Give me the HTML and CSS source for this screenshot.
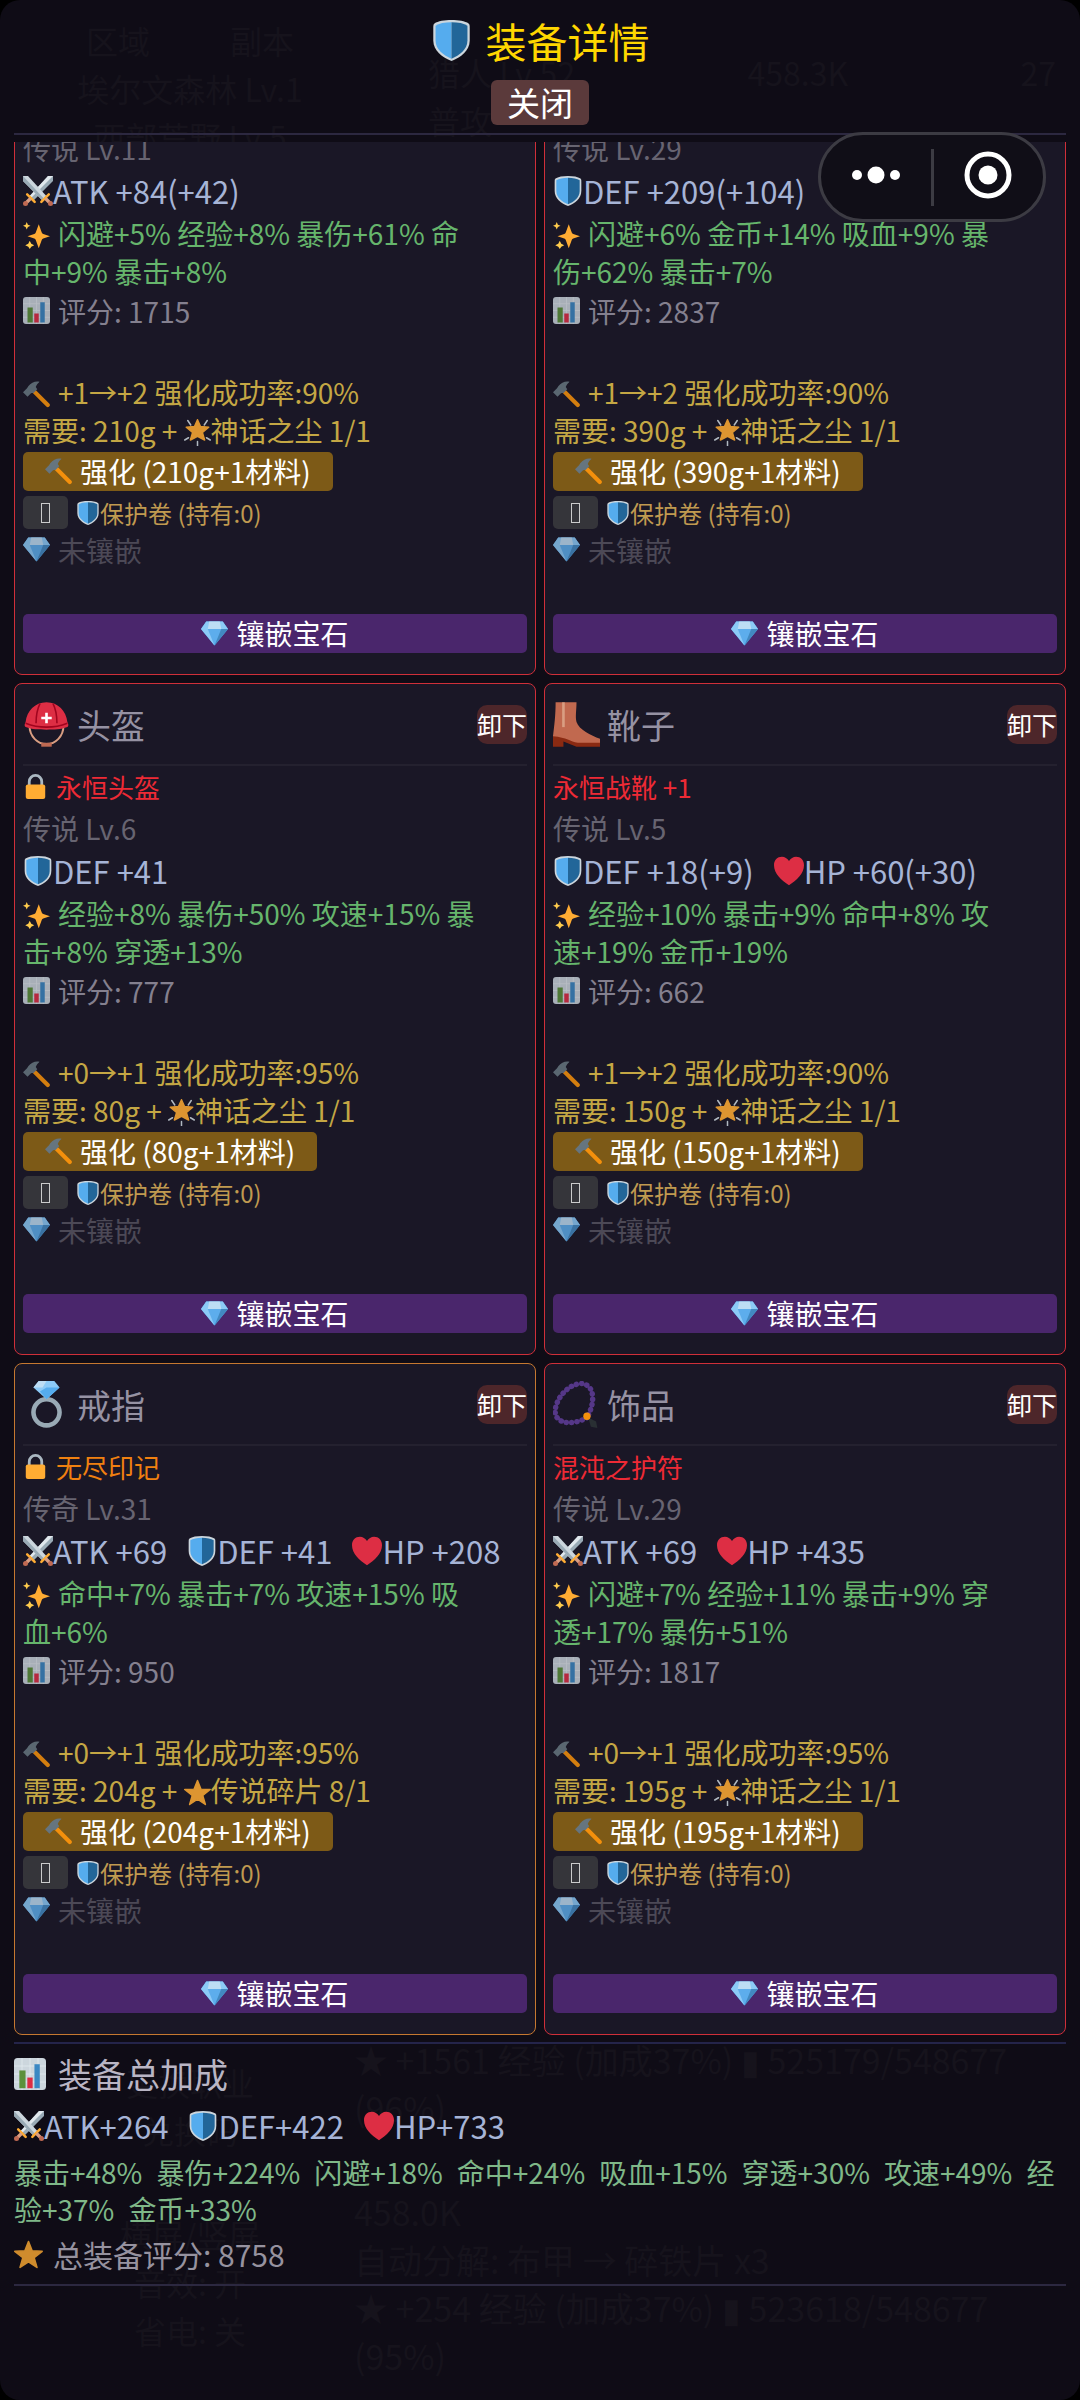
FILE: index.html
```html
<!DOCTYPE html>
<html lang="zh-CN">
<head>
  <meta charset="UTF-8" />
  <meta name="viewport" content="width=device-width, initial-scale=1.0"/>
  <title>装备详情</title>
  <link rel="stylesheet" href="styles.css">
</head>
<body>

  <!-- icon sprite -->
  <svg class="sprite" aria-hidden="true">
    <symbol id="shield" viewBox="0 0 36 36">
      <path fill="#ccd6dd" d="M18 0c6 0 12 1 15 3 1 1 1 2 1 4v11c0 9-8 15-16 18C10 33 2 27 2 18V7c0-2 0-3 1-4 3-2 9-3 15-3z"/>
      <path fill="#55acee" d="M18 2C12 2 7 3 4 5v13c0 8 7 13 14 16z"/>
      <path fill="#226699" d="M18 2c6 0 11 1 14 3v13c0 8-7 13-14 16z"/>
    </symbol>
    <symbol id="swords" viewBox="0 0 36 36">
      <path fill="#99aab5" d="M36 0v6L13 29l-5-5L30 0z"/>
      <path fill="#e1e8ed" d="M36 0L10 26l-2-2L30 0z"/>
      <path fill="#ccd6dd" d="M0 0v6l23 23 5-5L6 0z"/>
      <path fill="#99aab5" d="M0 0v6l23 23 2-2z"/>
      <path d="M5 22l9 9M31 22l-9 9" stroke="#ffac33" stroke-width="3" stroke-linecap="round"/>
      <path d="M9 27l-6 6M27 27l6 6" stroke="#d99e82" stroke-width="4"/>
      <circle cx="3" cy="33" r="3" fill="#bf6952"/><circle cx="33" cy="33" r="3" fill="#bf6952"/>
    </symbol>
    <symbol id="heart" viewBox="0 0 36 36">
      <path fill="#dd2e44" d="M36 11c0-6-4-10-9.500-10C23 1 20 3 18 6c-2-3-5-5-8.500-5C4 1 0 5 0 11c0 10 9 18 18 24 9-6 18-14 18-24z"/>
    </symbol>
    <symbol id="sparkles" viewBox="0 0 36 36">
      <path fill="#ffac33" d="M21 3l4 11c.5 1 1 1.500 2 2l9 3-9 3c-1 .5-1.500 1-2 2l-4 11-4-11c-.5-1-1-1.500-2-2l-9-3 9-3c1-.5 1.500-1 2-2z"/>
      <path fill="#ffcc4d" d="M5 0l1.500 3.500L10 5 6.500 6.500 5 10 3.500 6.500 0 5l3.500-1.500zM9 25l2 4 4 2-4 2-2 3-2-3-4-2 4-2z"/>
    </symbol>
    <symbol id="chart" viewBox="0 0 36 36">
      <rect width="36" height="36" rx="4" fill="#ccd6dd"/>
      <path d="M0 9h36M0 18h36M0 27h36M9 0v36M18 0v36M27 0v36" stroke="#e1e8ed"/>
      <path fill="#5c913b" d="M6 14h7v20H6z"/><path fill="#dd2e44" d="M15 22h6v12h-6z"/><path fill="#3b88c3" d="M23 7h6v27h-6z"/>
    </symbol>
    <symbol id="hammer" viewBox="0 0 36 36">
      <path d="M13 12l20 20" stroke="#f4900c" stroke-width="5.500" stroke-linecap="round"/>
      <path fill="#66757f" d="M22 1c-6-1-11 1-15 6-1 2-2 3-3 4l-4 4 6 6 4-4c1-1 2-1 4-1l5-5-2-3c1-3 3-5 5-7z"/>
    </symbol>
    <symbol id="star" viewBox="0 0 36 36">
      <path fill="#ffac33" stroke="#ffac33" stroke-width="2" stroke-linejoin="round" d="M18 2l4.500 11.500L35 14l-10 8 3.500 12L18 27 7.500 34 11 22 1 14l12.500-.5z"/>
    </symbol>
    <symbol id="glow" viewBox="0 0 36 36">
      <path d="M18 30v6M30 25l5 3M6 25l-5 3M27 8l4-6M9 8L5 2" stroke="#ccd6dd" stroke-width="2" stroke-linecap="round"/>
      <path fill="#ffac33" stroke="#ffac33" stroke-width="2" stroke-linejoin="round" d="M18 1l4 9 11 1-8.500 7 3 10L18 23l-9.500 5 3-10L3 11l11-1z"/>
    </symbol>
    <symbol id="gem" viewBox="0 0 36 36">
      <path fill="#5dadec" d="M7 2h22l7 10-18 22L0 12z"/>
      <path fill="#8ccaf7" d="M7 2h22l7 10H0z"/>
      <path fill="#bdddf4" d="M11 2h14l2 10H9z"/>
      <path fill="#8ccaf7" d="M0 12h9l9 22z"/><path fill="#4289c1" d="M36 12h-9l-9 22z"/>
    </symbol>
    <symbol id="lock" viewBox="0 0 36 36">
      <path fill="none" stroke="#aab8c2" stroke-width="4" d="M9 17v-6a9 9 0 0 1 18 0v6"/>
      <rect x="4" y="15" width="28" height="21" rx="3" fill="#ffac33"/>
    </symbol>
    <symbol id="helmet" viewBox="0 0 36 36">
      <path fill="none" stroke="#d99e82" stroke-width="1.500" d="M5 19c0 8 6 14 13 14s13-6 13-14"/>
      <path fill="#bf6952" d="M14 32h8v3h-8z"/>
      <path fill="#dd2e44" d="M18 1C9 1 3 8 2 16c-1 2-1 3 0 4 5 2 10 2 16 2s11 0 16-2c1-1 1-2 0-4C33 8 27 1 18 1z"/>
      <path fill="none" stroke="#a0041e" stroke-width="1.200" d="M13 2c-2 4-3 9-3 15M23 2c2 4 3 9 3 15M2 17c5 2 10 3 16 3s11-1 16-3"/>
      <path fill="#fff" d="M17 9h2v3h3v2h-3v3h-2v-3h-3v-2h3z"/>
    </symbol>
    <symbol id="boot" viewBox="0 0 36 36">
      <path fill="#8a2a12" d="M0 26h8l18 5 10-1v5H18L8 31v4H0z"/>
      <path fill="#c1694f" d="M2 1h16c0 6-1 11 0 15 2 6 11 10 18 13v3H19C13 31 11 28 0 27c1-8 2-16 2-26z"/>
      <path fill="#d99e82" d="M7 1h2v19H7z"/>
    </symbol>
    <symbol id="ring" viewBox="0 0 36 36">
      <circle cx="18" cy="24" r="10" fill="none" stroke="#99aab5" stroke-width="3.500"/>
      <path fill="#8ccaf7" d="M12 0h12l4 5-10 9L8 5z"/><path fill="#55acee" d="M18 0v5h10l-10 9-5-6 5-3z"/>
      <path fill="#bdddf4" d="M12 0h6L15 5H8z"/>
    </symbol>
    <symbol id="beads" viewBox="0 0 36 36">
      <path fill="none" stroke="#553788" stroke-width="4.200" stroke-linecap="round" stroke-dasharray="0.100 4" d="M26 28C18 33 5 34 2 26 0 17 9 4 20 2c12-1 13 14 6 26z"/>
      <path fill="#292f33" d="M27 28l6 3 1 5-5-1z"/>
      <circle cx="26" cy="27" r="2.800" fill="#f4900c"/>
    </symbol>
  </svg>

  <!-- game screen, dimmed under the panel -->
  <div class="game" aria-hidden="true">
    <div class="game-side">
      <div class="game-group">
        <p>区域&emsp;&emsp;&ensp;副本</p>
        <p>埃尔文森林 Lv.1</p>
        <p>西部荒野 Lv.5</p>
      </div>
      <div class="game-group">
        <p>更换职业</p>
        <p>兑换码</p>
        <p class="game-gap">横屏/竖屏</p>
        <p>音效: 开</p>
        <p>省电: 关</p>
      </div>
    </div>
    <div class="game-main">
      <div class="game-top"><p>猎人 Lv.52<br>普攻</p><p>458.3K</p><p>27</p></div>
      <div class="game-log">
        <p>★ +1561 经验 (加成37%) ▮ 525179/548677 (96%)</p>
        <p class="game-gap">458.0K</p>
        <p>自动分解: 布甲 → 碎铁片 x3</p>
        <p>★ +254 经验 (加成37%) ▮ 523618/548677 (95%)</p>
      </div>
    </div>
  </div>

  <div class="panel">
    <header class="panel-header">
      <h1><svg><use href="#shield"/></svg>装备详情</h1>
      <button type="button" class="btn-close">关闭</button>
    </header>

    <main class="equip-list">
      <div class="equip-grid">

        <section class="card legend">
          <p class="level">传说 Lv.11</p>
          <p class="stats"><span><svg><use href="#swords"/></svg>ATK +84(+42)</span></p>
          <p class="affix"><svg><use href="#sparkles"/></svg>闪避+5% 经验+8% 暴伤+61% 命中+9% 暴击+8%</p>
          <p class="score"><svg><use href="#chart"/></svg>评分: 1715</p>
          <div class="upgrade">
            <p><svg class="lead"><use href="#hammer"/></svg>+1→+2 强化成功率:90%</p>
            <p>需要: 210g + <svg><use href="#glow"/></svg>神话之尘 1/1</p>
          </div>
          <button type="button" class="btn-upgrade"><svg><use href="#hammer"/></svg>强化 (210g+1材料)</button>
          <div class="protect"><button type="button" class="toggle" aria-label="保护卷"><i></i></button><svg><use href="#shield"/></svg>保护卷 (持有:0)</div>
          <p class="socket"><svg><use href="#gem"/></svg>未镶嵌</p>
          <button type="button" class="btn-gem"><svg><use href="#gem"/></svg>镶嵌宝石</button>
        </section>

        <section class="card legend">
          <p class="level">传说 Lv.29</p>
          <p class="stats"><span><svg><use href="#shield"/></svg>DEF +209(+104)</span></p>
          <p class="affix"><svg><use href="#sparkles"/></svg>闪避+6% 金币+14% 吸血+9% 暴伤+62% 暴击+7%</p>
          <p class="score"><svg><use href="#chart"/></svg>评分: 2837</p>
          <div class="upgrade">
            <p><svg class="lead"><use href="#hammer"/></svg>+1→+2 强化成功率:90%</p>
            <p>需要: 390g + <svg><use href="#glow"/></svg>神话之尘 1/1</p>
          </div>
          <button type="button" class="btn-upgrade"><svg><use href="#hammer"/></svg>强化 (390g+1材料)</button>
          <div class="protect"><button type="button" class="toggle" aria-label="保护卷"><i></i></button><svg><use href="#shield"/></svg>保护卷 (持有:0)</div>
          <p class="socket"><svg><use href="#gem"/></svg>未镶嵌</p>
          <button type="button" class="btn-gem"><svg><use href="#gem"/></svg>镶嵌宝石</button>
        </section>

        <section class="card legend">
          <div class="card-head">
            <h2><svg><use href="#helmet"/></svg>头盔</h2>
            <button type="button" class="btn-remove">卸下</button>
          </div>
          <p class="name"><svg><use href="#lock"/></svg>永恒头盔</p>
          <p class="level">传说 Lv.6</p>
          <p class="stats"><span><svg><use href="#shield"/></svg>DEF +41</span></p>
          <p class="affix"><svg><use href="#sparkles"/></svg>经验+8% 暴伤+50% 攻速+15% 暴击+8% 穿透+13%</p>
          <p class="score"><svg><use href="#chart"/></svg>评分: 777</p>
          <div class="upgrade">
            <p><svg class="lead"><use href="#hammer"/></svg>+0→+1 强化成功率:95%</p>
            <p>需要: 80g + <svg><use href="#glow"/></svg>神话之尘 1/1</p>
          </div>
          <button type="button" class="btn-upgrade"><svg><use href="#hammer"/></svg>强化 (80g+1材料)</button>
          <div class="protect"><button type="button" class="toggle" aria-label="保护卷"><i></i></button><svg><use href="#shield"/></svg>保护卷 (持有:0)</div>
          <p class="socket"><svg><use href="#gem"/></svg>未镶嵌</p>
          <button type="button" class="btn-gem"><svg><use href="#gem"/></svg>镶嵌宝石</button>
        </section>

        <section class="card legend">
          <div class="card-head">
            <h2><svg><use href="#boot"/></svg>靴子</h2>
            <button type="button" class="btn-remove">卸下</button>
          </div>
          <p class="name">永恒战靴 +1</p>
          <p class="level">传说 Lv.5</p>
          <p class="stats"><span><svg><use href="#shield"/></svg>DEF +18(+9)</span><span><svg><use href="#heart"/></svg>HP +60(+30)</span></p>
          <p class="affix"><svg><use href="#sparkles"/></svg>经验+10% 暴击+9% 命中+8% 攻速+19% 金币+19%</p>
          <p class="score"><svg><use href="#chart"/></svg>评分: 662</p>
          <div class="upgrade">
            <p><svg class="lead"><use href="#hammer"/></svg>+1→+2 强化成功率:90%</p>
            <p>需要: 150g + <svg><use href="#glow"/></svg>神话之尘 1/1</p>
          </div>
          <button type="button" class="btn-upgrade"><svg><use href="#hammer"/></svg>强化 (150g+1材料)</button>
          <div class="protect"><button type="button" class="toggle" aria-label="保护卷"><i></i></button><svg><use href="#shield"/></svg>保护卷 (持有:0)</div>
          <p class="socket"><svg><use href="#gem"/></svg>未镶嵌</p>
          <button type="button" class="btn-gem"><svg><use href="#gem"/></svg>镶嵌宝石</button>
        </section>

        <section class="card epic">
          <div class="card-head">
            <h2><svg><use href="#ring"/></svg>戒指</h2>
            <button type="button" class="btn-remove">卸下</button>
          </div>
          <p class="name"><svg><use href="#lock"/></svg>无尽印记</p>
          <p class="level">传奇 Lv.31</p>
          <p class="stats"><span><svg><use href="#swords"/></svg>ATK +69</span><span><svg><use href="#shield"/></svg>DEF +41</span><span><svg><use href="#heart"/></svg>HP +208</span></p>
          <p class="affix"><svg><use href="#sparkles"/></svg>命中+7% 暴击+7% 攻速+15% 吸血+6%</p>
          <p class="score"><svg><use href="#chart"/></svg>评分: 950</p>
          <div class="upgrade">
            <p><svg class="lead"><use href="#hammer"/></svg>+0→+1 强化成功率:95%</p>
            <p>需要: 204g + <svg><use href="#star"/></svg>传说碎片 8/1</p>
          </div>
          <button type="button" class="btn-upgrade"><svg><use href="#hammer"/></svg>强化 (204g+1材料)</button>
          <div class="protect"><button type="button" class="toggle" aria-label="保护卷"><i></i></button><svg><use href="#shield"/></svg>保护卷 (持有:0)</div>
          <p class="socket"><svg><use href="#gem"/></svg>未镶嵌</p>
          <button type="button" class="btn-gem"><svg><use href="#gem"/></svg>镶嵌宝石</button>
        </section>

        <section class="card legend">
          <div class="card-head">
            <h2><svg><use href="#beads"/></svg>饰品</h2>
            <button type="button" class="btn-remove">卸下</button>
          </div>
          <p class="name">混沌之护符</p>
          <p class="level">传说 Lv.29</p>
          <p class="stats"><span><svg><use href="#swords"/></svg>ATK +69</span><span><svg><use href="#heart"/></svg>HP +435</span></p>
          <p class="affix"><svg><use href="#sparkles"/></svg>闪避+7% 经验+11% 暴击+9% 穿透+17% 暴伤+51%</p>
          <p class="score"><svg><use href="#chart"/></svg>评分: 1817</p>
          <div class="upgrade">
            <p><svg class="lead"><use href="#hammer"/></svg>+0→+1 强化成功率:95%</p>
            <p>需要: 195g + <svg><use href="#glow"/></svg>神话之尘 1/1</p>
          </div>
          <button type="button" class="btn-upgrade"><svg><use href="#hammer"/></svg>强化 (195g+1材料)</button>
          <div class="protect"><button type="button" class="toggle" aria-label="保护卷"><i></i></button><svg><use href="#shield"/></svg>保护卷 (持有:0)</div>
          <p class="socket"><svg><use href="#gem"/></svg>未镶嵌</p>
          <button type="button" class="btn-gem"><svg><use href="#gem"/></svg>镶嵌宝石</button>
        </section>

      </div>
    </main>

    <footer class="summary">
      <h2><svg><use href="#chart"/></svg>装备总加成</h2>
      <p class="stats"><span><svg><use href="#swords"/></svg>ATK+264</span><span><svg><use href="#shield"/></svg>DEF+422</span><span><svg><use href="#heart"/></svg>HP+733</span></p>
      <p class="total-affix">暴击+48%&ensp;暴伤+224%&ensp;闪避+18%&ensp;命中+24%&ensp;吸血+15%&ensp;穿透+30%&ensp;攻速+49%&ensp;经验+37%&ensp;金币+33%</p>
      <p class="total-score"><svg><use href="#star"/></svg>总装备评分: 8758</p>
    </footer>
  </div>

  <!-- mini program capsule -->
  <div class="capsule">
    <button type="button" aria-label="更多">
      <svg viewBox="0 0 50 50"><circle cx="6" cy="25" r="5"/><circle cx="25" cy="25" r="8.500"/><circle cx="44" cy="25" r="5"/></svg>
    </button>
    <button type="button" aria-label="关闭小程序">
      <svg viewBox="0 0 50 50"><circle cx="25" cy="25" r="21" fill="none" stroke="#fff" stroke-width="5"/><circle cx="25" cy="25" r="9.500"/></svg>
    </button>
  </div>

</body>
</html>
```

FILE: styles.css
```css
:root {
  --bg-color: #0f0c16;
  --card-bg: #1a1726;
  --line-color: #2c2840;
  --legend-color: #cf2f39;
  --epic-color: #c67830;
  --ghost-color: #16131c;
}

* {
  margin: 0;
  padding: 0;
  box-sizing: border-box;
}

html {
  background: #000;
}

body {
  font-family: "Noto Sans CJK SC", sans-serif;
  font-size: 28px;
  background: var(--bg-color);
  color: #fff;
  height: 100vh;
  border-radius: 20px;
  position: relative;
  overflow: hidden;
}

button {
  font-family: inherit;
  color: #fff;
  border: none;
  cursor: pointer;
}

h1, h2 {
  font-weight: normal;
}

svg {
  flex: none;
}

.sprite {
  display: none;
}

/* game screen behind */
.game {
  position: absolute;
  inset: 0;
  display: flex;
  color: var(--ghost-color);
  font-size: 32px;
  line-height: 48px;
}

.game-side {
  width: 330px;
  padding: 16px 0 46px 50px;
  text-align: center;
  display: flex;
  flex-direction: column;
  justify-content: space-between;
}

.game-main {
  flex: 1;
  padding: 48px 24px 20px;
  display: flex;
  flex-direction: column;
  justify-content: space-between;
}

.game-top {
  display: flex;
  justify-content: space-between;
  padding-left: 74px;
}

.game-log {
  font-size: 34px;
}

.game-gap {
  margin-top: 56px;
}

/* panel */
.panel {
  position: relative;
  height: 100%;
  padding: 0 14px;
  display: flex;
  flex-direction: column;
}

.panel-header {
  display: flex;
  flex-direction: column;
  align-items: center;
  padding: 10px 0 8px;
  margin-bottom: 7px;
  border-bottom: 2px solid var(--line-color);
}

.panel-header h1 {
  display: flex;
  align-items: center;
  gap: 14px;
  font-size: 41px;
  line-height: 60px;
  margin-bottom: 10px;
  color: #ffd700;
}

.panel-header h1 svg {
  width: 41px;
  height: 41px;
}

.btn-close {
  padding: 0 16px;
  font-size: 33px;
  line-height: 45px;
  border-radius: 6px;
  background: #5b3a3b;
}

.equip-list {
  flex: 1;
  min-height: 0;
  overflow: hidden;
  display: flex;
  flex-direction: column;
  justify-content: flex-end;
}

.equip-grid {
  display: grid;
  grid-template-columns: 1fr 1fr;
  gap: 8px;
}

.card {
  padding: 0 8px 21px;
  background: var(--card-bg);
  border: 1px solid;
  border-radius: 8px;
}

.card.legend {
  border-color: var(--legend-color);
}

.card.epic {
  border-color: var(--epic-color);
}

.card-head {
  display: flex;
  align-items: center;
  justify-content: space-between;
  height: 82px;
  border-bottom: 2px solid #24212f;
}

.card-head h2 {
  display: flex;
  align-items: center;
  gap: 7px;
  font-size: 34px;
  color: #9692a3;
}

.card-head h2 svg {
  width: 47px;
  height: 47px;
}

.btn-remove {
  width: 50px;
  font-size: 25px;
  line-height: 39px;
  border-radius: 10px;
  background: #4d262a;
}

.name,
.level,
.score,
.socket {
  display: flex;
  align-items: center;
  height: 41px;
}

.name {
  gap: 8px;
  font-size: 26px;
}

.name svg {
  width: 25px;
  height: 25px;
}

.legend .name {
  color: #ee2a35;
}

.epic .name {
  color: #f08010;
}

.level {
  color: #676471;
}

.stats {
  display: flex;
  gap: 20px;
  font-size: 31px;
  line-height: 46px;
  color: #a6b4d6;
}

.stats span {
  display: flex;
  align-items: center;
}

.stats svg {
  width: 30px;
  height: 30px;
}

.affix {
  padding-right: 48px;
  line-height: 38px;
  color: #66b56c;
}

.affix svg,
.upgrade svg {
  width: 27px;
  height: 27px;
  vertical-align: -4px;
}

.affix svg,
.upgrade .lead {
  margin-right: 8px;
}

.score,
.socket {
  gap: 8px;
}

.score {
  color: #84808f;
  margin-bottom: 42px;
}

.score svg,
.socket svg {
  width: 27px;
  height: 27px;
  opacity: 0.8;
}

.upgrade {
  line-height: 38px;
  color: #c4a744;
}

.upgrade svg {
  opacity: 0.85;
}

.btn-upgrade,
.btn-gem {
  display: flex;
  align-items: center;
  justify-content: center;
  gap: 8px;
  font-size: 28px;
  line-height: 39px;
  border-radius: 5px;
}

.btn-upgrade svg,
.btn-gem svg {
  width: 27px;
  height: 27px;
}

.btn-upgrade {
  padding: 0 22px;
  margin-top: 3px;
  background: #7d5a17;
}

.protect {
  display: flex;
  align-items: center;
  margin-top: 5px;
  height: 33px;
  font-size: 24px;
  color: #c09a50;
}

.protect svg {
  width: 24px;
  height: 24px;
}

.toggle {
  display: flex;
  align-items: center;
  justify-content: center;
  width: 45px;
  height: 33px;
  margin-right: 8px;
  border-radius: 5px;
  background: #35353a;
}

.toggle i {
  width: 9px;
  height: 20px;
  border: 1px solid #ccc;
}

.socket {
  color: #4c4956;
  margin-bottom: 44px;
}

.btn-gem {
  width: 100%;
  background: #4a266c;
}

/* totals */
.summary {
  margin-top: 7px;
  padding-bottom: 114px;
  border-top: 2px solid #24244a;
}

.summary h2 {
  display: flex;
  align-items: center;
  gap: 12px;
  font-size: 34px;
  line-height: 60px;
  color: #b9b5c4;
}

.summary h2 svg {
  width: 32px;
  height: 32px;
}

.summary .stats {
  line-height: 44px;
}

.total-affix {
  margin-top: 6px;
  line-height: 37px;
  color: #7fb888;
}

.total-score {
  display: flex;
  align-items: center;
  gap: 10px;
  padding-bottom: 4px;
  font-size: 30px;
  line-height: 52px;
  color: #96929f;
  border-bottom: 2px solid var(--line-color);
}

.total-score svg {
  width: 29px;
  height: 29px;
  opacity: 0.8;
}

.capsule {
  position: absolute;
  top: 132px;
  right: 34px;
  width: 228px;
  height: 90px;
  display: flex;
  align-items: center;
  border: 3px solid #3c3b43;
  border-radius: 45px;
  background: #100e17;
}

.capsule button {
  flex: 1;
  height: 57px;
  background: none;
}

.capsule button + button {
  border-left: 3px solid #3c3b43;
}

.capsule svg {
  width: 50px;
  height: 50px;
  fill: #fff;
}
```
